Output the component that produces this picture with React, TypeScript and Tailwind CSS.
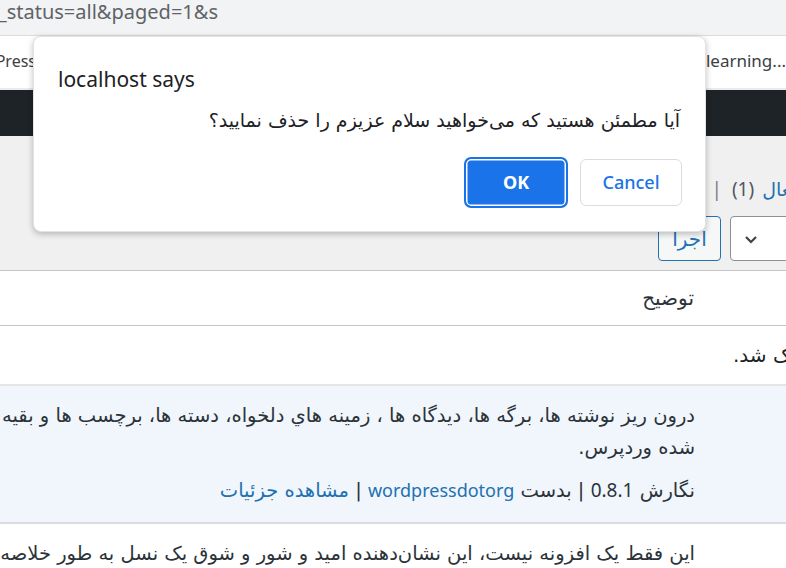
const ui = { fontFamily: '"Noto Sans", "DejaVu Sans", sans-serif' };
const fa = { fontFamily: '"DejaVu Sans", "Noto Sans", sans-serif' };

function BrowserChrome() {
  return (
    <>
      <div className="h-[36px] bg-[#f1f3f4] flex items-center border-b border-[#dadce0]">
        <div className="w-[218px] overflow-hidden flex justify-end whitespace-nowrap text-[20px] text-[#5f6368] leading-none pb-[12px]" style={ui}>
          plugin_status=all&amp;paged=1&amp;s
        </div>
      </div>
      <div className="h-[54px] bg-white flex items-center justify-between border-b-2 border-[#e8eaed] text-[17px] text-[#3c4043]" style={ui}>
        <div className="w-[36px] overflow-hidden flex justify-end whitespace-nowrap pb-[2px] text-[16px]">WordPress</div>
        <div className="whitespace-nowrap pb-[2px]">learning...</div>
      </div>
      <div className="h-[46px] bg-[#1d2327]" />
    </>
  );
}

function Toolbar() {
  return (
    <div dir="rtl" className="pt-[40px] pb-[9px]" style={fa}>
      <div className="flex items-center gap-[8px] mr-[-14px] text-[19px] h-[26px] whitespace-nowrap">
        <span className="text-[#2271b1]">فعال</span>
        <span className="text-[#50575e]" style={ui}>(1)</span>
        <span className="text-[#787c82] pr-[2px]" style={ui}>|</span>
      </div>
      <div className="flex items-center gap-[9px] mr-[-24px] mt-[14px]">
        <div className="w-[80px] h-[45px] bg-white border border-[#8c8f94] rounded-[4px] flex items-center justify-end pl-[12px]">
          <svg width="16" height="16" viewBox="0 0 16 16" className="text-[#3c434a]">
            <path d="M3 6l5 5 5-5" fill="none" stroke="currentColor" strokeWidth="2.2" />
          </svg>
        </div>
        <div className="w-[63px] h-[45px] bg-[#f6f7f7] border border-[#2271b1] rounded-[4px] flex items-center justify-center text-[#2271b1] text-[20px]">
          اجرا
        </div>
      </div>
    </div>
  );
}

function Table() {
  return (
    <div className="border-t border-[#c3c4c7] text-[#1d2327]" style={fa}>
      <div dir="rtl" className="h-[55px] bg-white border-b border-[#c3c4c7] flex items-center pr-[92px] text-[20px] text-[#2c3338]">
        توضیح
      </div>
      <div className="h-[60px] bg-white border-b-2 border-[#e5e5e5] overflow-hidden">
        <div className="pl-[733px] pt-[14px] text-[20px] leading-[30px] text-[#1d2327] whitespace-nowrap">
          <span dir="rtl">افزونه سلام عزیزم با موفقیت پاک شد.</span>
        </div>
      </div>
      <div dir="rtl" className="h-[138px] bg-[#f0f6fc] border-b-2 border-[#dcdcde] pr-[91px] pt-[14px] text-[19.5px] text-[#2c3338] whitespace-nowrap">
        <div className="h-[32px] leading-[32px]">
          درون ریز نوشته ها، برگه ها، دیدگاه ها ، زمینه هاي دلخواه، دسته ها، برچسب ها و بقیه از یک فایل برون ریزی
        </div>
        <div className="h-[32px] leading-[32px]">شده وردپرس.</div>
        <div className="h-[32px] leading-[32px] mt-[10px]">
          <span>نگارش </span>
          <span className="text-[19px]" style={ui}>0.8.1</span>
          <span> | بدست </span>
          <span className="text-[18px] text-[#2271b1]" style={ui}>wordpressdotorg</span>
          <span> | </span>
          <span className="text-[#2271b1]">مشاهده جزئیات</span>
        </div>
      </div>
      <div dir="rtl" className="h-[60px] bg-white pr-[91px] pt-[14px] text-[19.5px] text-[#2c3338] whitespace-nowrap leading-[32px]">
        این فقط یک افزونه نیست، این نشان‌دهنده امید و شور و شوق یک نسل به طور خلاصه در چهار کلمه است
      </div>
    </div>
  );
}

function ConfirmDialog() {
  return (
    <div className="absolute left-[33px] top-[36px] w-[673px] h-[196px] bg-white rounded-[8px] border border-[#e3e3e3] shadow-[0_2px_6px_rgba(0,0,0,0.25)] flex flex-col" style={ui}>
      <div className="pl-[24px] pt-[28px] text-[21px] leading-[28px] text-[#202124]">localhost says</div>
      <div dir="rtl" className="pr-[25px] mt-[13px] text-[19px] leading-[28px] text-[#202124]" style={fa}>
        آیا مطمئن هستید که می‌خواهید سلام عزیزم را حذف نمایید؟
      </div>
      <div className="flex justify-end gap-[12px] pr-[23px] mt-[auto] mb-[23px]">
        <button className="w-[104px] h-[51px] rounded-[7px] bg-[#1a73e8] border-2 border-[#1a73e8] shadow-[inset_0_0_0_1.5px_white] text-white text-[18px] font-bold">
          OK
        </button>
        <button className="w-[102px] h-[47px] mt-[2px] rounded-[6px] bg-white border border-[#dadce0] text-[#1a73e8] text-[18px] font-medium">
          Cancel
        </button>
      </div>
    </div>
  );
}

export default function App() {
  return (
    <div className="relative w-[786px] h-[568px] overflow-hidden bg-[#f0f0f1]">
      <BrowserChrome />
      <Toolbar />
      <Table />
      <ConfirmDialog />
    </div>
  );
}
